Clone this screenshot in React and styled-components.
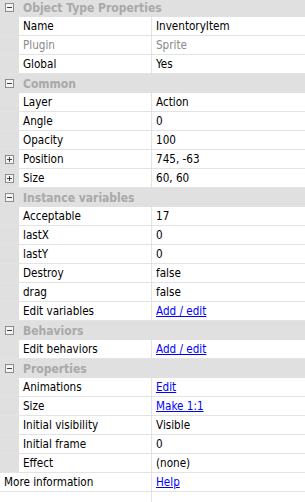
import React from "react";
import styled, { createGlobalStyle } from "styled-components";

const Global = createGlobalStyle`
  html, body { margin: 0; padding: 0; background: #ffffff; }
  body { font-family: "DejaVu Sans Condensed", "Liberation Sans", sans-serif; font-size: 11.6px; }
`;

const Grid = styled.div`
  width: 305px;
  height: 502px;
  overflow: hidden;
  display: flex;
  flex-direction: column;
  background: #ffffff;
`;

const Header = styled.div`
  flex: none;
  height: ${(p) => (p.$first ? 17 : 19)}px;
  display: flex;
  align-items: ${(p) => (p.$first ? "flex-end" : "center")};
  background: #e0e0e0;
  color: #a9a9a9;
  font-weight: bold;
  font-size: 12px;
`;

const HeaderInner = styled.div`
  height: 19px;
  display: flex;
  align-items: center;
`;

const ToggleSlot = styled.div`
  width: 19px;
  height: 19px;
  flex: none;
  display: flex;
  align-items: center;
  justify-content: center;
`;

const Box = styled.svg`
  display: block;
  margin-left: -1px;
`;

const HeaderText = styled.span`
  padding-left: 4px;
  white-space: nowrap;
`;

const Row = styled.div`
  flex: none;
  height: 18px;
  display: flex;
  border-bottom: 1px solid #e3e3e3;
`;

const Gutter = styled.div`
  width: 19px;
  flex: none;
  background: #e0e0e0;
  display: flex;
  align-items: center;
  justify-content: center;
`;

const NameCell = styled.div`
  width: ${(p) => (p.$full ? 152 : 133)}px;
  flex: none;
  box-sizing: border-box;
  padding-left: 4px;
  display: flex;
  align-items: center;
  border-right: 1px solid #e3e3e3;
  color: ${(p) => (p.$dim ? "#8a8a8a" : "#000000")};
  white-space: nowrap;
`;

const ValueCell = styled.div`
  flex: 1;
  padding-left: 4px;
  display: flex;
  align-items: center;
  color: ${(p) => (p.$dim ? "#8a8a8a" : "#000000")};
  white-space: nowrap;
`;

const Link = styled.a`
  color: #0000ff;
  text-decoration: underline;
  cursor: pointer;
`;

const Filler = styled.div`
  flex: 1;
  display: flex;
`;

const FillerName = styled.div`
  width: 152px;
  flex: none;
  box-sizing: border-box;
  border-right: 1px solid #e3e3e3;
`;

function Toggle({ plus }) {
  return (
    <Box width="9" height="9" viewBox="0 0 9 9">
      <rect x="0.5" y="0.5" width="8" height="8" fill="#f4f4f4" stroke="#8c8c8c" />
      <line x1="2" y1="4.5" x2="7" y2="4.5" stroke="#404040" />
      {plus && <line x1="4.5" y1="2" x2="4.5" y2="7" stroke="#404040" />}
    </Box>
  );
}

const sections = [
  {
    title: "Object Type Properties",
    rows: [
      { name: "Name", value: "InventoryItem" },
      { name: "Plugin", value: "Sprite", dim: true },
      { name: "Global", value: "Yes" },
    ],
  },
  {
    title: "Common",
    rows: [
      { name: "Layer", value: "Action" },
      { name: "Angle", value: "0" },
      { name: "Opacity", value: "100" },
      { name: "Position", value: "745, -63", expand: true },
      { name: "Size", value: "60, 60", expand: true },
    ],
  },
  {
    title: "Instance variables",
    rows: [
      { name: "Acceptable", value: "17" },
      { name: "lastX", value: "0" },
      { name: "lastY", value: "0" },
      { name: "Destroy", value: "false" },
      { name: "drag", value: "false" },
      { name: "Edit variables", value: "Add / edit", link: true },
    ],
  },
  {
    title: "Behaviors",
    rows: [{ name: "Edit behaviors", value: "Add / edit", link: true }],
  },
  {
    title: "Properties",
    rows: [
      { name: "Animations", value: "Edit", link: true },
      { name: "Size", value: "Make 1:1", link: true },
      { name: "Initial visibility", value: "Visible" },
      { name: "Initial frame", value: "0" },
      { name: "Effect", value: "(none)" },
    ],
  },
];

export default function App() {
  return (
    <>
      <Global />
      <Grid>
        {sections.map((s, i) => (
          <React.Fragment key={s.title}>
            <Header $first={i === 0}>
              <HeaderInner>
                <ToggleSlot>
                  <Toggle />
                </ToggleSlot>
                <HeaderText>{s.title}</HeaderText>
              </HeaderInner>
            </Header>
            {s.rows.map((r) => (
              <Row key={s.title + r.name}>
                <Gutter>{r.expand && <Toggle plus />}</Gutter>
                <NameCell $dim={r.dim}>{r.name}</NameCell>
                <ValueCell $dim={r.dim}>
                  {r.link ? <Link>{r.value}</Link> : r.value}
                </ValueCell>
              </Row>
            ))}
          </React.Fragment>
        ))}
        <Row>
          <NameCell $full>More information</NameCell>
          <ValueCell>
            <Link>Help</Link>
          </ValueCell>
        </Row>
        <Filler>
          <FillerName />
        </Filler>
      </Grid>
    </>
  );
}
